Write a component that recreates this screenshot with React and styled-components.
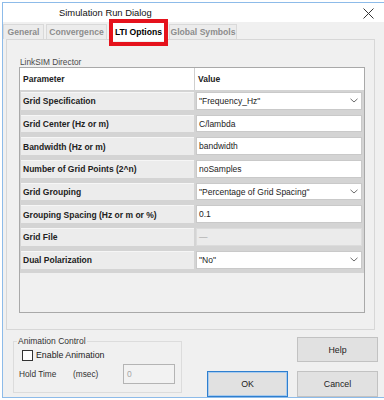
import React from "react";
import styled, { createGlobalStyle } from "styled-components";

const GlobalStyle = createGlobalStyle`
  html, body {
    margin: 0;
    padding: 0;
    background: #ffffff;
    overflow: hidden;
  }
  body {
    font-family: "Liberation Sans", Arial, sans-serif;
    color: #1a1a1a;
  }
  * {
    box-sizing: border-box;
  }
`;

const TABS = [
  { label: "General", width: 41 },
  { label: "Convergence", width: 61 },
  { label: "LTI Options", width: 59, active: true },
  { label: "Global Symbols", width: 68 },
];

const ROWS = [
  { name: "Grid Specification", value: '"Frequency_Hz"', select: true },
  { name: "Grid Center (Hz or m)", value: "C/lambda" },
  { name: "Bandwidth (Hz or m)", value: "bandwidth" },
  { name: "Number of Grid Points (2^n)", value: "noSamples" },
  { name: "Grid Grouping", value: '"Percentage of Grid Spacing"', select: true },
  { name: "Grouping Spacing (Hz or m or %)", value: "0.1" },
  { name: "Grid File", value: "\u2014", disabled: true },
  { name: "Dual Polarization", value: '"No"', select: true },
];

function Chevron() {
  return (
    <svg width="8" height="5" viewBox="0 0 8 5">
      <polyline points="0.5,0.8 4,4 7.5,0.8" fill="none" stroke="#6d6d6d" strokeWidth="1" />
    </svg>
  );
}

function CloseIcon() {
  return (
    <svg width="11" height="11" viewBox="0 0 11 11">
      <line x1="0.5" y1="0.5" x2="10.5" y2="10.5" stroke="#333" strokeWidth="1" />
      <line x1="10.5" y1="0.5" x2="0.5" y2="10.5" stroke="#333" strokeWidth="1" />
    </svg>
  );
}

export default function App() {
  return (
    <>
      <GlobalStyle />
      <Window>
        <TitleBar>
          <Title>Simulation Run Dialog</Title>
          <CloseBox>
            <CloseIcon />
          </CloseBox>
        </TitleBar>

        <TabStrip>
          {TABS.map((tab) => (
            <Tab key={tab.label} $w={tab.width} $active={tab.active}>
              {tab.label}
            </Tab>
          ))}
        </TabStrip>

        <TabPanel>
          <GroupLabel>LinkSIM Director</GroupLabel>
          <Table>
            <HeaderRow>
              <HeaderCell>Parameter</HeaderCell>
              <HeaderCell $divider>Value</HeaderCell>
            </HeaderRow>
            {ROWS.map((row) => (
              <Row key={row.name}>
                <LabelCell>{row.name}</LabelCell>
                <ValueCell $disabled={row.disabled}>
                  <span>{row.value}</span>
                  {row.select && <Chevron />}
                </ValueCell>
              </Row>
            ))}
            <Filler />
          </Table>
        </TabPanel>

        <BottomBar>
          <Group>
            <Legend>Animation Control</Legend>
            <CheckRow>
              <CheckBox />
              <span>Enable Animation</span>
            </CheckRow>
            <HoldRow>
              <HoldLabel $w={54}>Hold Time</HoldLabel>
              <HoldLabel $w={50}>(msec)</HoldLabel>
              <HoldInput>0</HoldInput>
            </HoldRow>
          </Group>
          <ButtonGrid>
            <Button $col={2}>Help</Button>
            <Button $primary>OK</Button>
            <Button>Cancel</Button>
          </ButtonGrid>
        </BottomBar>
      </Window>
    </>
  );
}

const Window = styled.div`
  margin: 2px 0 0 2px;
  width: 382px;
  height: 396px;
  border: 1px solid #8dbbe9;
  border-right: none;
  background: #f0f0f0;
  display: flex;
  flex-direction: column;
`;

const TitleBar = styled.div`
  height: 19px;
  background: #ffffff;
  display: flex;
  align-items: center;
  padding-left: 56px;
  padding-right: 10px;
`;

const Title = styled.div`
  font-size: 9.4px;
  color: #111;
  flex: 1;
`;

const CloseBox = styled.div`
  display: flex;
  margin-top: 1px;
`;

const TabStrip = styled.div`
  height: 17px;
  display: flex;
  align-items: flex-end;
  gap: 1px;
  position: relative;
  z-index: 1;
`;

const Tab = styled.div`
  position: relative;
  width: ${(p) => p.$w}px;
  height: ${(p) => (p.$active ? 19 : 15)}px;
  margin-bottom: ${(p) => (p.$active ? -2 : 0)}px;
  margin-right: ${(p) => (p.$active ? 0 : 1)}px;
  border: 1px solid #d9d9d9;
  border-bottom: none;
  background: ${(p) => (p.$active ? "#ffffff" : "#ececec")};
  color: ${(p) => (p.$active ? "#000" : "#8d8d8d")};
  font-size: 8.6px;
  font-weight: bold;
  display: flex;
  align-items: center;
  justify-content: center;
  white-space: nowrap;

  &::after {
    content: "";
    display: ${(p) => (p.$active ? "block" : "none")};
    position: absolute;
    top: -4px;
    bottom: -5px;
    left: -1px;
    right: -1px;
    border: 4px solid #e5121c;
  }
`;

const TabPanel = styled.div`
  height: 291px;
  margin: 0 9px 0 3px;
  border: 1px solid #d7d7d7;
  padding: 17px 9px 16px 12px;
  display: flex;
  flex-direction: column;
`;

const GroupLabel = styled.div`
  font-size: 8.3px;
  color: #4a4a4a;
  height: 10px;
  line-height: 10px;
  margin-left: 1px;
`;

const Table = styled.div`
  width: 346px;
  flex: 1;
  border: 1px solid #a9a9a9;
  display: flex;
  flex-direction: column;
  background: #f0f0f0;
`;

const HeaderRow = styled.div`
  height: 22px;
  display: grid;
  grid-template-columns: 174px 1fr;
  background: #ffffff;
`;

const HeaderCell = styled.div`
  display: flex;
  align-items: center;
  padding-left: 3px;
  font-size: 8.5px;
  font-weight: bold;
  color: #222;
  border-left: ${(p) => (p.$divider ? "1px solid #cfcfcf" : "none")};
`;

const Row = styled.div`
  height: 22.7px;
  display: grid;
  grid-template-columns: 173px 1fr;
  column-gap: 2px;
  padding: 2px 2px 3px 1px;
  background: #d4d4d4;
`;

const LabelCell = styled.div`
  background: #ececec;
  border-top: 1px solid #f6f6f6;
  display: flex;
  align-items: center;
  padding-left: 2px;
  font-size: 8.5px;
  font-weight: bold;
  color: #222;
  white-space: nowrap;
`;

const ValueCell = styled.div`
  background: ${(p) => (p.$disabled ? "#ebebeb" : "#ffffff")};
  border: 1px solid ${(p) => (p.$disabled ? "#dcdcdc" : "#c9c9c9")};
  display: flex;
  align-items: center;
  justify-content: space-between;
  padding: 0 3px 0 2px;
  font-size: 8.5px;
  color: ${(p) => (p.$disabled ? "#a0a0a0" : "#222")};
  white-space: nowrap;
`;

const Filler = styled.div`
  flex: 1;
  border-top: 1px solid #d4d4d4;
`;

const BottomBar = styled.div`
  flex: 1;
  display: flex;
  padding: 0 6px 0 10px;
`;

const Group = styled.fieldset`
  margin: 6px 0 4px 0;
  width: 169px;
  border: 1px solid #dcdcdc;
  padding: 3px 0 0 8px;
  font-size: 8.5px;
  color: #222;
`;

const Legend = styled.legend`
  padding: 0 1px;
  margin-left: -5px;
  font-size: 8.5px;
  color: #333;
`;

const CheckRow = styled.div`
  display: flex;
  align-items: center;
  gap: 3px;
  height: 12px;
  font-size: 8.8px;
`;

const CheckBox = styled.div`
  width: 11px;
  height: 11px;
  border: 1px solid #333;
  background: #fff;
`;

const HoldRow = styled.div`
  display: flex;
  align-items: center;
  margin: 3px 0 0 -3px;
  height: 20px;
`;

const HoldLabel = styled.div`
  width: ${(p) => p.$w}px;
  font-size: 8.3px;
  color: #333;
`;

const HoldInput = styled.div`
  width: 52px;
  height: 20px;
  border: 1px solid #b4b4b4;
  background: #f2f2f2;
  color: #a6a6a6;
  font-size: 8.5px;
  display: flex;
  align-items: center;
  padding-left: 3px;
`;

const ButtonGrid = styled.div`
  margin-left: auto;
  padding-top: 7px;
  display: grid;
  grid-template-columns: 81px 81px;
  grid-template-rows: 25px 26px;
  column-gap: 9px;
  row-gap: 9px;
`;

const Button = styled.div`
  grid-column: ${(p) => p.$col || "auto"};
  background: #e1e1e1;
  border: 1px solid ${(p) => (p.$primary ? "#2f7fcf" : "#c2c2c2")};
  box-shadow: ${(p) => (p.$primary ? "inset 0 0 0 1px #a8cbee" : "none")};
  display: flex;
  align-items: center;
  justify-content: center;
  font-size: 8.8px;
  color: #222;
`;
